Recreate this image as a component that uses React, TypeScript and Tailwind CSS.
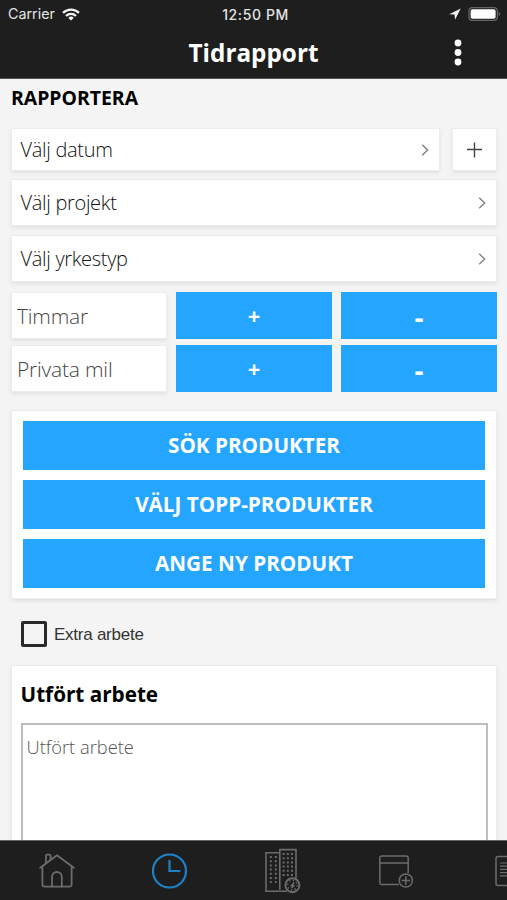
import { useState } from "react";

const CARD = "border border-[#ececec] bg-white shadow-[0_2px_4px_rgba(0,0,0,0.08)]";
const BLUE = "bg-[#24a5ff] font-bold text-white";

function StatusBar() {
  return (
    <div className="flex h-7 items-center pl-2 pr-[6px] font-['Inter',sans-serif] text-[14px] text-[#e4e4e4]">
      <div className="flex flex-1 items-center gap-[7px]">
        <span className="text-[14.3px]">Carrier</span>
        <svg width="18" height="13" viewBox="0 0 18 13" fill="none" stroke="#f4f4f4" strokeWidth="2.2">
          <path d="M1 4.9a11.3 11.3 0 0 1 16 0" />
          <path d="M4 8a7 7 0 0 1 10 0" />
          <path d="M9 12.6 6.3 9.9a3.8 3.8 0 0 1 5.4 0Z" fill="#f4f4f4" stroke="none" />
        </svg>
      </div>
      <span className="pl-0.5 text-[14px] font-medium tracking-[0.6px]">12:50 PM</span>
      <div className="flex flex-1 items-center justify-end gap-[7px]">
        <svg width="12" height="12" viewBox="0 0 12 12" fill="#f4f4f4">
          <path d="M11.7.4.3 6.2l5.3.3.4 5.2Z" />
        </svg>
        <svg width="33" height="14" viewBox="0 0 33 14">
          <rect x="0.9" y="0.6" width="28.4" height="12.8" rx="3.4" fill="none" stroke="#666" strokeWidth="1.2" />
          <rect x="2.6" y="2.3" width="25" height="9.4" rx="1.8" fill="#fff" />
          <path d="M30.6 5v4q1.6-.5 1.6-2t-1.6-2Z" fill="#666" />
        </svg>
      </div>
    </div>
  );
}

function Chevron() {
  return (
    <svg width="8" height="12" viewBox="0 0 8 12" fill="none" stroke="#808080" strokeWidth="1.4">
      <path d="M1.2.8 6.6 6l-5.4 5.2" />
    </svg>
  );
}

function PickerRow({ label, className }: { label: string; className: string }) {
  return (
    <button className={`${CARD} ${className} flex items-center justify-between pl-[8.5px] pr-[10px] text-left text-[20px] font-light tracking-[-0.3px] text-[#111]`}>
      <span>{label}</span>
      <Chevron />
    </button>
  );
}

function StepperRow({ label }: { label: string }) {
  const [value, setValue] = useState("");
  const step = (n: number) => setValue(String(Math.max(0, Number(value) + n)));

  return (
    <div className="grid h-[47px] grid-cols-3 gap-[9px]">
      <input
        value={value}
        onChange={(e) => setValue(e.target.value)}
        placeholder={label}
        className={`${CARD} min-w-0 px-[5px] pt-0.5 text-[21px] font-light tracking-[-0.2px] text-[#333] placeholder:text-[#444]`}
      />
      <button onClick={() => step(1)} className={`${BLUE} text-[22px]`}>+</button>
      <button onClick={() => step(-1)} className={`${BLUE} pt-0.5 text-[28px]`}>-</button>
    </div>
  );
}

function HomeIcon() {
  return (
    <svg width="36" height="36" viewBox="0 0 36 36" fill="none" stroke="#6c6c6c" strokeWidth="1.8" strokeLinejoin="round" strokeLinecap="round">
      <path d="M1.2 14.7 18 2.3l16.8 12.4" />
      <path d="M3.4 13.7v17.6q0 2.4 2.4 2.4h24.4q2.4 0 2.4-2.4V13.7" />
      <path d="M13 33.5V23.9a4.9 4.9 0 0 1 9.8 0v9.6" />
      <path d="M7 9.9V2.7q0-1 1-1h2.6q1 0 1 1v4" />
    </svg>
  );
}

function ClockIcon() {
  return (
    <svg width="36" height="36" viewBox="0 0 36 36" fill="none" stroke="#1e82c8" strokeWidth="2.2" strokeLinecap="round">
      <circle cx="17.5" cy="18" r="16.5" />
      <path d="M17.5 7.8V18h10" />
    </svg>
  );
}

function BuildingsIcon() {
  return (
    <svg width="36" height="46" viewBox="0 0 36 46" fill="none" stroke="#6c6c6c" strokeWidth="1.6">
      <path d="M14.8 4.8H1v38.4h21M14.8 41.8V1.6H31V30" />
      <path d="M5.8 8v27M10.8 8v27" strokeWidth="2" strokeDasharray="2 2.2" />
      <path d="M18.6 5v24M22.8 5v24M27 5v24" strokeWidth="2" strokeDasharray="2 2.2" />
      <circle cx="27.4" cy="37.2" r="7" fill="#1e1e1e" strokeWidth="1.9" />
      <circle cx="27.4" cy="37.2" r="4.8" strokeDasharray="1.2 2.57" />
      <path d="m29.2 34.4-2.8 3.4h2.2l-2 2.2" />
    </svg>
  );
}

function CalendarAddIcon() {
  return (
    <svg width="36" height="36" viewBox="0 0 36 36" fill="none" stroke="#6c6c6c" strokeWidth="1.5">
      <path d="M21 31.5H4q-2.2 0-2.2-2.2V5.2Q1.8 3 4 3h24q2.2 0 2.2 2.2V20" />
      <path d="M1.8 10h28.4" />
      <circle cx="27.8" cy="27.5" r="6.6" />
      <path d="M27.8 23.3v8.4M23.6 27.5H32" />
    </svg>
  );
}

function DocumentIcon() {
  return (
    <svg width="28" height="32" viewBox="0 0 28 32" fill="none" stroke="#6c6c6c" strokeWidth="1.5">
      <rect x="1" y="1.5" width="26" height="29" rx="2" />
      <path d="M5 8h16M5 11.2h16M5 14.4h16M5 17.6h16M5 20.8h16" strokeWidth="1.2" />
    </svg>
  );
}

export default function App() {
  const [extra, setExtra] = useState(false);

  return (
    <div className="flex h-[900px] w-[507px] flex-col overflow-hidden bg-[#f4f4f4] font-['Open_Sans',sans-serif]">
      <header className="h-[79px] shrink-0 border-b border-[#555] bg-[#1e1e1e] text-white">
        <StatusBar />
        <div className="grid h-[50px] grid-cols-[1fr_auto_1fr] items-center">
          <h1 className="col-start-2 text-[24.3px] font-bold">Tidrapport</h1>
          <button aria-label="Meny" className="mb-0.5 mr-[45px] justify-self-end">
            <svg width="8" height="27" viewBox="0 0 8 27" fill="#fff">
              <circle cx="4" cy="4" r="3.4" />
              <circle cx="4" cy="13.5" r="3.4" />
              <circle cx="4" cy="23" r="3.4" />
            </svg>
          </button>
        </div>
      </header>

      <main className="flex min-h-0 flex-1 flex-col overflow-hidden pl-[11px] pr-[10px]">
        <h2 className="mt-[5px] h-7 text-[19.4px] font-bold leading-7 text-black">RAPPORTERA</h2>

        <div className="mt-4 flex h-[43px] shrink-0 gap-3">
          <PickerRow label="Välj datum" className="flex-1" />
          <button aria-label="Lägg till datum" className={`${CARD} flex w-[45px] items-center justify-center`}>
            <svg width="16" height="16" viewBox="0 0 16 16" stroke="#444" strokeWidth="1.4">
              <path d="M7.5.5v15M0 7.500h15" />
            </svg>
          </button>
        </div>
        <PickerRow label="Välj projekt" className="mt-2 h-[47px] shrink-0" />
        <PickerRow label="Välj yrkestyp" className="mt-[9px] h-[47px] shrink-0" />

        <div className="mt-[10px] flex shrink-0 flex-col gap-[6px]">
          <StepperRow label="Timmar" />
          <StepperRow label="Privata mil" />
        </div>

        <section className={`${CARD} mt-[18px] flex shrink-0 flex-col gap-[10px] px-[11px] py-[10px] text-[20.7px]`}>
          <button className={`${BLUE} h-[49px] pt-px`}>SÖK PRODUKTER</button>
          <button className={`${BLUE} h-[49px] pt-px`}>VÄLJ TOPP-PRODUKTER</button>
          <button className={`${BLUE} h-[49px] pt-px`}>ANGE NY PRODUKT</button>
        </section>

        <label className="ml-[10px] mt-[22px] flex h-[26px] shrink-0 items-center gap-[7px] font-['Liberation_Sans',sans-serif] text-[17px] tracking-[-0.25px] text-[#333]">
          <input
            type="checkbox"
            checked={extra}
            onChange={(e) => setExtra(e.target.checked)}
            className="size-[26px] appearance-none rounded-[2px] border-3 border-[#2a2a2a] checked:bg-[#24a5ff]"
          />
          <span className="pt-0.5">Extra arbete</span>
        </label>

        <section className={`${CARD} mt-[18px] h-[300px] shrink-0 px-[8.5px]`}>
          <h3 className="mt-[13px] h-[30px] text-[20.7px] font-bold leading-[30px] text-black">Utfört arbete</h3>
          <textarea
            placeholder="Utfört arbete"
            className="mt-[14px] h-[220px] w-full resize-none border-2 border-[#bdbdbd] px-1 py-2 text-[18.3px] font-light text-[#333] placeholder:text-[#555]"
          />
        </section>
      </main>

      <nav className="flex h-[60px] shrink-0 items-center overflow-hidden border-t border-[#666] bg-[#1e1e1e]">
        <button aria-label="Hem" className="flex w-[113px] shrink-0 justify-center"><HomeIcon /></button>
        <button aria-label="Tid" className="flex w-[113px] shrink-0 justify-center"><ClockIcon /></button>
        <button aria-label="Projekt" className="flex w-[113px] shrink-0 justify-center"><BuildingsIcon /></button>
        <button aria-label="Kalender" className="flex w-[113px] shrink-0 justify-center"><CalendarAddIcon /></button>
        <button aria-label="Dokument" className="flex w-[113px] shrink-0 justify-center"><DocumentIcon /></button>
      </nav>
    </div>
  );
}
